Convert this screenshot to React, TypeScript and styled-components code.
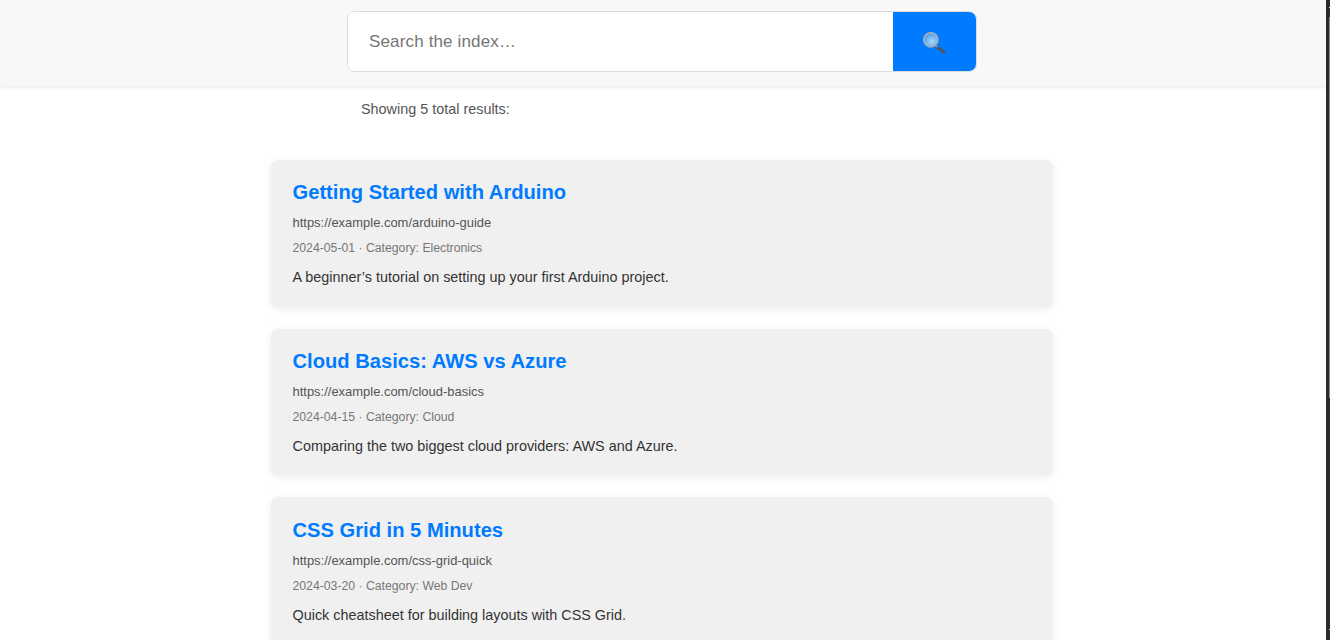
import * as React from "react";
import styled, { createGlobalStyle } from "styled-components";

const GlobalStyle = createGlobalStyle`
  html, body {
    margin: 0;
    height: 640px;
    overflow: hidden;
    background: #fff;
    font-family: "Liberation Sans", Arial, sans-serif;
  }
`;

const Page = styled.div`
  display: flex;
  height: 640px;
  overflow: hidden;
`;

const Main = styled.div`
  flex: 1;
  min-width: 0;
`;

const ScrollTrack = styled.div`
  width: 4px;
  flex: none;
  background: #2b2b2b;
  display: flex;
  flex-direction: column;
  align-items: flex-end;
`;

const ScrollTick = styled.div`
  width: 1px;
  height: 1px;
  background: #e0e0e0;
  margin-top: 7px;

  &:last-child {
    margin-top: auto;
    margin-bottom: 10px;
  }
`;

const ScrollThumb = styled.div`
  width: 1px;
  height: 381px;
  margin-top: 9px;
  background: #8a8a8a;
`;

const Header = styled.header`
  height: 86px;
  background: #f8f8f8;
  box-shadow: 0 1px 4px rgba(0, 0, 0, 0.1);
  display: flex;
  justify-content: center;
  align-items: flex-start;
  padding: 11px 2px 0 0;
  box-sizing: border-box;
`;

const SearchForm = styled.form`
  display: flex;
  width: 630px;
  height: 61px;
  box-sizing: border-box;
  border: 1px solid #ddd;
  border-radius: 8px;
  overflow: hidden;
  background: #fff;
`;

const SearchInput = styled.input`
  flex: 1;
  min-width: 0;
  border: none;
  outline: none;
  padding: 0 21px;
  font-family: inherit;
  font-size: 17px;
  letter-spacing: 0.15px;
  color: #333;

  &::placeholder {
    color: #757575;
    opacity: 1;
  }
`;

const SearchButton = styled.button`
  width: 83px;
  border: none;
  background: #007bff;
  display: flex;
  align-items: center;
  justify-content: center;
  padding: 0;
`;

const Content = styled.main`
  padding-right: 3px;
`;

const Summary = styled.p`
  width: 601px;
  margin: 15px auto 0;
  font-size: 14.4px;
  line-height: 17px;
  color: #555;
`;

const Results = styled.div`
  width: 782px;
  margin: 42px auto 0;
  display: flex;
  flex-direction: column;
  gap: 22px;
`;

const Card = styled.article`
  background: #f0f0f0;
  border-radius: 8px;
  box-shadow: 0 2px 8px rgba(0, 0, 0, 0.08);
  padding: 19.45px 22px 20px;
  height: 146.6px;
  box-sizing: border-box;
`;

const Title = styled.a`
  display: block;
  color: #007bff;
  font-size: 20.16px;
  font-weight: 700;
  line-height: 26px;
  text-decoration: none;
`;

const Url = styled.div`
  margin-top: 10px;
  font-size: 12.96px;
  line-height: 16px;
  color: #555;
`;

const Meta = styled.div`
  margin-top: 10px;
  font-size: 12.24px;
  line-height: 15px;
  color: #777;
`;

const Snippet = styled.p`
  margin: 12px 0 0;
  font-size: 14.4px;
  line-height: 18px;
  color: #333;
`;

const results = [
  {
    title: "Getting Started with Arduino",
    url: "https://example.com/arduino-guide",
    meta: "2024-05-01 · Category: Electronics",
    snippet: "A beginner’s tutorial on setting up your first Arduino project.",
  },
  {
    title: "Cloud Basics: AWS vs Azure",
    url: "https://example.com/cloud-basics",
    meta: "2024-04-15 · Category: Cloud",
    snippet: "Comparing the two biggest cloud providers: AWS and Azure.",
  },
  {
    title: "CSS Grid in 5 Minutes",
    url: "https://example.com/css-grid-quick",
    meta: "2024-03-20 · Category: Web Dev",
    snippet: "Quick cheatsheet for building layouts with CSS Grid.",
  },
];

const MagnifierIcon = () => (
  <svg width="24" height="24" viewBox="0 0 24 24" aria-hidden="true">
    <defs>
      <radialGradient id="lens" cx="58%" cy="62%" r="65%">
        <stop offset="0%" stopColor="#a4d8fc" />
        <stop offset="60%" stopColor="#6fb6f2" />
        <stop offset="100%" stopColor="#2f86dc" />
      </radialGradient>
    </defs>
    <path d="M12.5 15.5 L21 22" stroke="#8a8f94" strokeWidth="1.6" />
    <path d="M15.5 18 L20.8 22" stroke="#50555b" strokeWidth="3" strokeLinecap="round" />
    <circle cx="7.8" cy="9.8" r="7" fill="url(#lens)" stroke="#aab0b4" strokeWidth="1.7" />
  </svg>
);

export default function App() {
  return (
    <Page>
      <GlobalStyle />
      <Main>
        <Header>
          <SearchForm onSubmit={(e) => e.preventDefault()}>
            <SearchInput type="text" placeholder="Search the index…" />
            <SearchButton type="submit" aria-label="search">
              <MagnifierIcon />
            </SearchButton>
          </SearchForm>
        </Header>
        <Content>
          <Summary>Showing 5 total results:</Summary>
          <Results>
            {results.map((r) => (
              <Card key={r.url}>
                <Title href={r.url}>{r.title}</Title>
                <Url>{r.url}</Url>
                <Meta>{r.meta}</Meta>
                <Snippet>{r.snippet}</Snippet>
              </Card>
            ))}
          </Results>
        </Content>
      </Main>
      <ScrollTrack>
        <ScrollTick />
        <ScrollThumb />
        <ScrollTick />
      </ScrollTrack>
    </Page>
  );
}
